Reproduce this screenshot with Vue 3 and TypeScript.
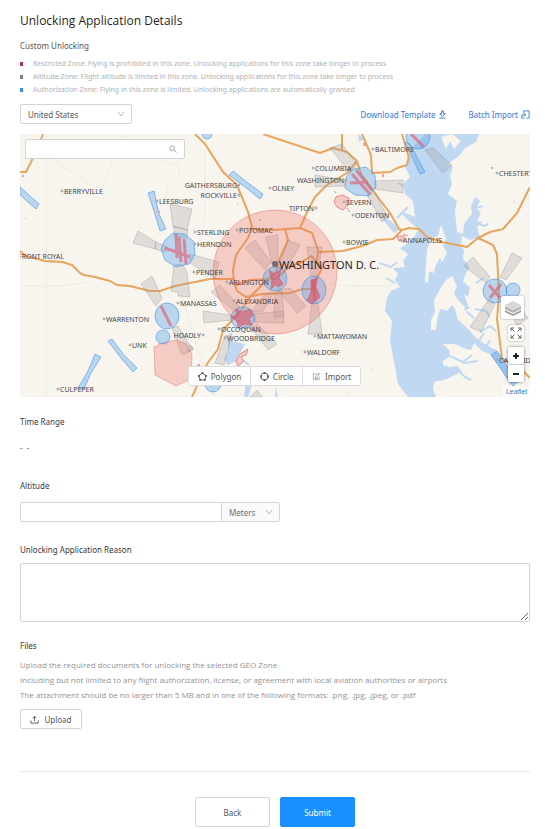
<script setup lang="ts">
import { ref } from 'vue'

type Side = 'left' | 'right' | 'none'
interface Town {
  name: string
  x: number
  y: number
  dot: Side
}

const country = ref('United States')
const unit = ref('Meters')
const altitude = ref('')
const reason = ref('')
const search = ref('')

const zones = [
  { kind: 'restricted', text: 'Restricted Zone: Flying is prohibited in this zone. Unlocking applications for this zone take longer to process' },
  { kind: 'altitude', text: 'Altitude Zone: Flight altitude is limited in this zone. Unlocking applications for this zone take longer to process' },
  { kind: 'authorization', text: 'Authorization Zone: Flying in this zone is limited. Unlocking applications are automatically granted' },
]

const towns: Town[] = [
  { name: 'BERRYVILLE', x: 64, y: 194, dot: 'left' },
  { name: 'LEESBURG', x: 159, y: 204, dot: 'left' },
  { name: 'GAITHERSBURG', x: 237, y: 188, dot: 'right' },
  { name: 'ROCKVILLE', x: 237, y: 198, dot: 'right' },
  { name: 'OLNEY', x: 272, y: 191, dot: 'left' },
  { name: 'COLUMBIA', x: 315, y: 171, dot: 'left' },
  { name: 'WASHINGTON', x: 344, y: 183, dot: 'right' },
  { name: 'SEVERN', x: 346, y: 205, dot: 'left' },
  { name: 'TIPTON', x: 314, y: 211, dot: 'right' },
  { name: 'ODENTON', x: 355, y: 218, dot: 'left' },
  { name: 'STERLING', x: 197, y: 235, dot: 'left' },
  { name: 'HERNDON', x: 197, y: 247, dot: 'left' },
  { name: 'POTOMAC', x: 239, y: 233, dot: 'left' },
  { name: 'BOWIE', x: 346, y: 245, dot: 'left' },
  { name: 'BALTIMORE', x: 375, y: 152, dot: 'left' },
  { name: 'CHESTERTOWN', x: 499, y: 176, dot: 'left' },
  { name: 'ANNAPOLIS', x: 403, y: 243, dot: 'left' },
  { name: 'PENDER', x: 196, y: 275, dot: 'left' },
  { name: 'ARLINGTON', x: 229, y: 285, dot: 'left' },
  { name: 'MANASSAS', x: 180, y: 306, dot: 'left' },
  { name: 'ALEXANDRIA', x: 236, y: 304, dot: 'left' },
  { name: 'OCCOQUAN', x: 221, y: 332, dot: 'left' },
  { name: 'WOODBRIDGE', x: 227, y: 341, dot: 'left' },
  { name: 'HOADLY', x: 201, y: 338, dot: 'right' },
  { name: 'WARRENTON', x: 106, y: 322, dot: 'left' },
  { name: 'UNK', x: 132, y: 348, dot: 'left' },
  { name: 'CULPEPER', x: 60, y: 392, dot: 'left' },
  { name: 'MATTAWOMAN', x: 317, y: 339, dot: 'left' },
  { name: 'WALDORF', x: 307, y: 355, dot: 'left' },
  { name: 'CAMBRIDGE', x: 499, y: 363, dot: 'left' },
  { name: 'FRONT ROYAL', x: 64, y: 259, dot: 'none' },
]

const roads = [
  'M43 134L40 142 31 162 26 172H20',
  'M20 251L26 256 45 261 62 262 72 265 80 273 84 275 95 277 110 281 117 285 130 286 150 291 160 291 175 286 190 283 210 279 233 279',
  'M195 134L205 144 223 172 237 185 248 212 252 227 248 238 236 255 233 270 234 282 237 291 246 297 262 294 290 293 303 289 312 289 322 268 317 262 318 250 312 233 300 228 273 230 252 229',
  'M285 229L288 240 280 258 276 272 264 283 250 297 240 312 223 330 218 349 207 364 192 397',
  'M300 228L308 210 315 197 327 185 347 173 357 161',
  'M263 134L320 153 333 148 347 152 357 161 361 174 380 200 390 213 399 229 402 230',
  'M342 134V150',
  'M317 262L311 256 300 263 290 266 276 279 250 280 236 285',
  'M318 252L343 251 362 246 377 240 393 239 402 230 409 228 419 229 427 237 442 242 467 247 478 238 490 232 503 229 517 213 530 187',
  'M478 238L493 245 497 254 498 275 499 295 497 319 500 342 502 359 519 367 530 378',
  'M362 134L371 155 372 173 390 172 397 168 407 165 409 158 402 134',
]

const minorRoads = [
  'M50 158L72 172 90 184 102 188 106 178 113 160 128 134',
  'M160 161L178 165 180 174 168 186 163 205',
  'M20 286H60L90 282',
  'M46 134V397',
  'M205 150V220',
  'M180 290L196 345 215 397',
  'M300 350L330 370 350 397',
  'M330 285L370 286 392 286',
]

const approaches = [
  '170,204 192,209 187,230 173,227',
  '174,226 188,230 187,238 174,236',
  '138,231 156,242 155,249 133,243',
  '156,242 167,247 165,252 155,249',
  '174,265 171,291 178,292 178,296 190,297 187,272 182,264',
  '190,254 219,262 215,279 190,263',
  '330,148 342,144 357,165 350,173',
  '315,175 345,180 345,186 315,187',
  '375,181 403,180 403,193 375,189',
  '367,195 375,193 388,217 382,222',
  '425,150 433,148 452,165 443,173',
  '245,248 255,240 271,262 265,270',
  '266,237 278,235 278,261 272,264',
  '288,240 300,245 285,271 279,268',
  '307,247 322,247 317,277 311,277',
  '278,290 290,288 306,306 297,313',
  '253,314 283,311 284,323 254,322',
  '203,311 231,315 231,320 204,323',
  '308,334 312,302 318,302 322,334',
  '266,293 274,293 262,312 251,312',
  '275,292 282,291 284,317 274,317',
  '211,292 220,285 240,307 235,312',
  '225,336 232,334 224,365 215,363',
  '251,328 257,324 277,344 268,350',
  '141,284 152,276 162,298 156,306',
  '172,328 178,326 193,350 182,355',
  '464,266 473,257 490,277 486,283',
  '512,253 522,258 506,280 500,277',
  '489,299 495,304 481,332 470,327',
  '505,300 512,296 528,318 517,326',
  '250,397 257,390 262,397',
  '190,345 194,348 188,352',
]

const corridors = [
  '20,187 39,204 36,209 20,195',
  '148,193 154,191 159,214 166,229 160,231 155,214',
  '229,175 233,171 248,183 263,194 260,199 245,187',
  '108,341 112,339 124,355 137,368 133,372 121,358',
  '95,354 101,357 91,373 84,389 78,388 88,371',
  '405,142 410,144 425,172 420,174',
  '491,355 497,351 518,382 513,386',
]

const runways = [
  'M176 234L177 258M179 237L181 262M184 239L186 264M165 248L190 257',
  'M161 306L171 326',
  'M352 174L370 194M350 183L368 182M356 170L372 190',
  'M411 134L424 147',
  'M489 285L500 298M501 284L490 298',
  'M313 280L315 300',
]
</script>

<template>
  <main class="page">
    <h1>Unlocking Application Details</h1>
    <h2>Custom Unlocking</h2>
    <ul class="zones">
      <li v-for="z in zones" :key="z.kind" :class="z.kind">{{ z.text }}</li>
    </ul>

    <div class="bar">
      <div class="picker country">
        <select v-model="country" aria-label="Country">
          <option>United States</option>
          <option>Canada</option>
        </select>
        <svg viewBox="0 0 8 8" aria-hidden="true"><path d="M1 2l3 4 3-4" /></svg>
      </div>
      <nav class="links">
        <a href="#template">Download Template
          <svg viewBox="0 0 10 10" aria-hidden="true"><path d="M4 1h2v3h2L5 7.200 2 4h2zM1.500 9h7" /></svg>
        </a>
        <a href="#batch">Batch Import
          <svg viewBox="0 0 10 10" aria-hidden="true"><path d="M3 4V1h6v8H6M1 5.500h4M3.500 3.800L5.300 5.500 3.500 7.300M1 5.500V9h3" /></svg>
        </a>
      </nav>
    </div>

    <section class="map" aria-label="Zone map">
      <svg class="canvas" viewBox="20 134 510 263" preserveAspectRatio="xMidYMid slice">
        <rect class="land" x="20" y="134" width="510" height="263" />
        <g class="minor"><path v-for="d in minorRoads" :key="d" :d="d" /></g>

        <path class="water" d="M425 134H479L476 142 465 148 460 155 448 164 453 167 450 176 452 184 448 194 457 201 455 211 456 221 457 232 463 234 464 224 472 214 471 206 475 197 480 201 476 208 481 213 477 221 483 222 477 227 480 237 470 240 462 236 461 246 464 250 463 259 470 267 466 273 463 281 470 288 467 301 473 307 463 311 455 309 458 320 464 325 470 331 474 336 483 343 490 347 496 350 506 364 517 382 510 385 500 368 490 354 482 351 474 343 471 350 466 349 455 344 443 344 449 350 450 356 443 361 443 365 450 367 457 366 462 371 457 374 447 379 434 382 433 389 436 397H408L398 384 395 367 390 341 392 321 385 311 387 297 391 291 400 287 395 280 398 274 393 268 405 267 403 261 408 254 400 248 407 244 415 236 418 229 410 222 400 212 408 214 415 217 413 201 405 194 403 184 410 177 405 167 408 154 413 147Z" />
        <path class="water" d="M228 340L245 344 239 355 235 362 227 365 224 358 228 352ZM275 397L276 386 278 397ZM247 372L252 385 248 397 244 397ZM358 134L364 139 359 142ZM378 212L391 221 399 230 394 233 388 226 384 221Z" />
        <path class="land" d="M441 225L444 233 446 239 443 246 447 253 442 262 440 258 435 267 434 273 429 271 428 283 425 282 426 264 427 250 431 238 438 236ZM452 276L457 286 454 293 458 300 465 307 462 316 457 311 452 305 447 311 440 309 437 320 436 330 431 330 431 320 435 312 434 300 440 289 446 280ZM441 137L452 134 461 141 454 149 450 141 446 149ZM464 294L470 298 477 304 475 312 468 306Z" />
        <path class="creek" d="M379 263L391 267 397 262M386 278L395 283M397 218L408 207M450 356L465 363 478 361M457 369L465 377 471 380M464 361L472 355M476 283L484 278M475 309L486 311 490 317M472 209L483 206M479 224L484 226 488 224M480 332L490 326 496 331M466 311L474 318M478 342L484 333M486 347L490 340M405 187L398 183M244 361L249 365" />

        <g class="road"><path v-for="d in roads" :key="d" :d="d" /></g>

        <g class="approach"><polygon v-for="p in approaches" :key="p" :points="p" /></g>
        <g class="prohibited">
          <circle cx="275" cy="272" r="62" />
          <polygon points="154,346 158,347 158,344 176,340 187,344 188,348 192,354 191,379 176,386 155,375" />
        </g>
        <g class="advisory">
          <polygon v-for="p in corridors" :key="p" :points="p" />
          <path d="M165 240L173 233 185 234 194 242 195 255 189 264 176 267 165 260 161 249Z" />
          <path d="M353 169L366 167 375 175 376 187 369 196 355 195 345 188 346 177Z" />
          <circle cx="275" cy="279" r="12" />
          <ellipse cx="314" cy="290" rx="12" ry="14" />
          <ellipse cx="243" cy="318" rx="12" ry="11" />
          <ellipse cx="167" cy="316" rx="12" ry="13" />
          <circle cx="163" cy="337" r="7" />
          <circle cx="418" cy="137" r="12" />
          <circle cx="495" cy="291" r="12" />
          <circle cx="513" cy="290" r="7" />
          <circle cx="213" cy="384" r="8" />
          <circle cx="207" cy="134" r="5" />
        </g>
        <g class="runway"><path v-for="d in runways" :key="d" :d="d" /></g>
        <path class="core" d="M269 270L274 274 281 269 279 278 283 284 278 287 276 284 271 289 272 280ZM311 280L317 278 316 287 320 297 312 304 307 300 311 293ZM236 309L242 312 250 309 253 315 249 319 252 325 244 324 239 328 236 320 231 317 237 315Z" />
        <path class="outline" d="M336 197L342 195 349 198 348 205 343 210 337 207 334 202ZM334 191L336 193M347 208L350 212M240 354L248 349 246 355 241 357 244 361 238 366 236 361ZM397 236H404V241H399ZM403 234L408 236M196 367L199 364 201 370 197 373Z" />
        <path class="speck" d="M22 175h2v2h-2zM25 218h1v1h-1zM259 219h2v2h-2zM382 174h2v3h-2zM363 143h3v3h-3zM491 167h2v2h-2zM514 201h1v1h-1zM371 369h1v1h-1zM237 204h1v1h-1zM158 211h2v2h-2z" />

        <g class="towns">
          <template v-for="t in towns" :key="t.name">
            <circle v-if="t.dot !== 'none'" :cx="t.dot === 'right' ? t.x + 2 : t.x - 2" :cy="t.y - 3" r="1" />
            <text :x="t.x" :y="t.y" :text-anchor="t.dot === 'left' ? 'start' : 'end'">{{ t.name }}</text>
          </template>
          <rect x="273" y="262" width="4" height="4" />
          <text class="capital" x="279" y="269">WASHINGTON D. C.</text>
        </g>
      </svg>

      <div class="search">
        <input v-model="search" type="text" aria-label="Search location" />
        <svg viewBox="0 0 8 8" aria-hidden="true"><circle cx="3.200" cy="3.200" r="2.400" /><path d="M5 5l2.500 2.500" /></svg>
      </div>

      <div class="tools">
        <button type="button">
          <svg viewBox="0 0 10 10" aria-hidden="true"><path d="M5 1.200L9 4.200 7.600 8.800H2.400L1 4.200z" /><path class="node" d="M5 1.200h.01M9 4.200h.01M7.600 8.800h.01M2.400 8.800h.01M1 4.200h.01" /></svg>
          Polygon
        </button>
        <button type="button">
          <svg viewBox="0 0 10 10" aria-hidden="true"><circle cx="5" cy="5" r="4" /><path class="node" d="M5 1h.01M9 5h.01M5 9h.01M1 5h.01" /></svg>
          Circle
        </button>
        <button type="button">
          <svg class="muted" viewBox="0 0 10 10" aria-hidden="true"><path d="M6 2H1.500v6.500H8V5M3.500 6.500L4 5 8 1l1 1-4 4zM3 7h4" /></svg>
          Import
        </button>
      </div>

      <div class="controls">
        <button class="layers" type="button" aria-label="Layers">
          <svg viewBox="0 0 18 18" aria-hidden="true">
            <path fill="#9a9a9a" d="M1 11l8 4 8-4v2l-8 4-8-4z" /><path fill="#f4f4f4" d="M1 10l8 4 8-4v1l-8 4-8-4z" /><path fill="#b4b4b4" d="M1 7l8 4 8-4v3l-8 4-8-4z" /><path fill="#d6d6d6" d="M9 2l8 4-8 5-8-5z" />
          </svg>
        </button>
        <button type="button" aria-label="Full screen">
          <svg viewBox="0 0 12 12" aria-hidden="true"><path class="arrows" d="M1 4V1h3M1 1l3.500 3.500M8 1h3v3M11 1L7.500 4.500M1 8v3h3M1 11l3.500-3.500M11 8v3H8M11 11L7.500 7.500" /></svg>
        </button>
        <div class="zoom">
          <button type="button" aria-label="Zoom in"><svg viewBox="0 0 12 12" aria-hidden="true"><path d="M3 6h6M6 3v6" /></svg></button>
          <button type="button" aria-label="Zoom out"><svg viewBox="0 0 12 12" aria-hidden="true"><path d="M3 6h6" /></svg></button>
        </div>
      </div>
      <a class="credit" href="#leaflet">Leaflet</a>
    </section>

    <section class="field time">
      <h3>Time Range</h3>
      <p>-&nbsp; -</p>
    </section>

    <section class="field altitude-field">
      <label for="altitude">Altitude</label>
      <div class="group">
        <input id="altitude" v-model="altitude" type="text" />
        <div class="picker unit">
          <select v-model="unit" aria-label="Altitude unit">
            <option>Meters</option>
            <option>Feet</option>
          </select>
          <svg viewBox="0 0 8 8" aria-hidden="true"><path d="M1 2l3 4 3-4" /></svg>
        </div>
      </div>
    </section>

    <section class="field reason-field">
      <label for="reason">Unlocking Application Reason</label>
      <textarea id="reason" v-model="reason"></textarea>
    </section>

    <section class="field files">
      <h3>Files</h3>
      <p>Upload the required documents for unlocking the selected GEO Zone</p>
      <p>Including but not limited to any flight authorization, license, or agreement with local aviation authorities or airports</p>
      <p>The attachment should be no larger than 5 MB and in one of the following formats: .png, .jpg, .jpeg, or .pdf</p>
      <button class="upload" type="button">
        <svg viewBox="0 0 10 10" aria-hidden="true"><path d="M1 6v3h8V6M5 7V1.500M3 3.500l2-2 2 2" /></svg>
        Upload
      </button>
    </section>

    <footer class="actions">
      <button type="button">Back</button>
      <button class="primary" type="submit">Submit</button>
    </footer>
  </main>
</template>

<style>
body {
  margin: 0;
  background: #fff;
}
</style>

<style scoped>
* {
  box-sizing: border-box;
}

.page {
  padding: 12px 15px 2px 20px;
  font-family: 'Noto Sans', 'Open Sans', sans-serif;
  font-size: 8px;
  color: #55555a;
}

h1, h2, h3, p, ul {
  margin: 0;
  padding: 0;
  font-weight: 400;
}

h1 {
  font-family: 'Open Sans', sans-serif;
  font-size: 12px;
  line-height: 18px;
  color: #1f1f24;
}

h2 {
  margin-top: 8px;
  font-size: 8px;
  line-height: 16px;
}

button, input, select, textarea {
  margin: 0;
  font: inherit;
  color: inherit;
  border: 1px solid #d4d4d4;
  border-radius: 2px;
  background: #fff;
  outline: none;
}

svg {
  fill: none;
  stroke: currentColor;
}

.zones {
  margin-top: 3px;
  margin-bottom: 8px;
  list-style: none;
  font-size: 7px;
  line-height: 13px;
  color: #b0b0b2;
}

.zones li {
  display: flex;
  align-items: center;
  gap: 10px;
}

.zones li::before {
  content: '';
  width: 3px;
  height: 4px;
  background: #b5344e;
}

.zones .altitude::before {
  background: #7d828a;
}

.zones .authorization::before {
  background: #3a8fe0;
}

.bar {
  display: flex;
  justify-content: space-between;
  align-items: center;
}

.picker {
  display: flex;
  position: relative;
}

.picker select {
  width: 100%;
  height: 20px;
  padding: 0 7px;
  appearance: none;
}

.picker svg {
  position: absolute;
  right: 7px;
  top: 6px;
  width: 8px;
  height: 8px;
  color: #b8b8b8;
  pointer-events: none;
}

.country {
  width: 112px;
}

.links {
  display: flex;
  gap: 21px;
}

.links a {
  display: flex;
  align-items: center;
  gap: 3px;
  color: #3578d4;
  text-decoration: none;
}

.links svg {
  width: 9px;
  height: 9px;
}

.map {
  position: relative;
  margin-top: 10px;
  overflow: hidden;
}

.canvas {
  display: block;
  width: 100%;
  stroke: none;
}

.land {
  fill: #f8f5ef;
}

.water {
  fill: #c0d8f1;
}

.creek {
  fill: none;
  stroke: #c0d8f1;
  stroke-width: 2;
}

.minor {
  fill: none;
  stroke: #efebe4;
}

.road {
  fill: none;
  stroke: #e8a55e;
  stroke-width: 2;
  stroke-linejoin: round;
}

.approach {
  fill: rgba(150, 150, 150, 0.25);
  stroke: rgba(130, 130, 130, 0.3);
}

.prohibited {
  fill: rgba(240, 110, 95, 0.3);
  stroke: rgba(225, 95, 90, 0.4);
}

.advisory {
  fill: rgba(100, 170, 235, 0.42);
  stroke: rgba(70, 150, 225, 0.6);
}

.runway {
  fill: none;
  stroke: rgba(222, 95, 108, 0.65);
  stroke-width: 3;
}

.core {
  fill: rgba(222, 75, 90, 0.55);
  stroke: rgba(205, 70, 95, 0.5);
}

.outline {
  fill: rgba(240, 110, 95, 0.3);
  stroke: #e8868a;
}

.speck {
  fill: #eda0a2;
}

.towns {
  font-size: 7px;
}

.towns text {
  fill: #45454a;
}

.towns circle {
  fill: #fff;
  stroke: #98989c;
}

.towns rect {
  fill: #777f96;
  stroke: #44485a;
}

.towns .capital {
  font-size: 11px;
  fill: #26262b;
}

.search {
  position: absolute;
  left: 5px;
  top: 5px;
  width: 160px;
}

.search input {
  display: block;
  width: 100%;
  height: 20px;
  padding: 0 20px 0 6px;
}

.search svg {
  position: absolute;
  right: 8px;
  top: 6px;
  width: 8px;
  height: 8px;
  color: #aaa;
}

.tools {
  position: absolute;
  left: 50%;
  bottom: 11px;
  display: flex;
  width: 173px;
  margin-left: -87px;
  border: 1px solid #dcdcdc;
  border-radius: 2px;
  background: #fff;
}

.tools button {
  display: flex;
  flex: 1 1 auto;
  align-items: center;
  justify-content: center;
  gap: 4px;
  height: 18px;
  padding: 0;
  border: 0;
}

.tools button + button {
  border-left: 1px solid #dcdcdc;
  border-radius: 0;
}

.tools svg {
  width: 9px;
  height: 9px;
  overflow: visible;
}

.tools .node {
  stroke-width: 2;
  stroke-linecap: square;
}

.tools .muted {
  color: #aaa;
}

.controls {
  position: absolute;
  right: 6px;
  bottom: 15px;
  display: flex;
  flex-direction: column;
  align-items: flex-end;
  gap: 6px;
}

.controls button {
  display: grid;
  place-items: center;
  width: 16px;
  height: 16px;
  padding: 0;
  border: 0;
  color: #222;
  box-shadow: 0 0 2px rgba(0, 0, 0, 0.45);
}

.controls button svg {
  width: 12px;
  height: 12px;
  stroke-width: 2;
}

.controls button .arrows {
  stroke: #666;
  stroke-width: 1;
}

.controls .layers {
  width: 23px;
  height: 23px;
}

.controls .layers svg {
  width: 18px;
  height: 18px;
  stroke: none;
}

.zoom {
  display: flex;
  flex-direction: column;
  border-radius: 2px;
  box-shadow: 0 0 3px rgba(0, 0, 0, 0.5);
}

.zoom button {
  height: 17px;
  box-shadow: none;
}

.zoom button + button {
  height: 18px;
  border-top: 1px solid #ccc;
  border-radius: 0 0 2px 2px;
}

.credit {
  position: absolute;
  right: 0;
  bottom: 0;
  padding: 0 3px;
  font-family: 'Liberation Sans', sans-serif;
  font-size: 7px;
  line-height: 10px;
  color: #2f86b5;
  text-decoration: none;
  background: rgba(255, 255, 255, 0.7);
}

.field h3, .field label {
  display: block;
  font-size: 8px;
  line-height: 16px;
  color: #38383d;
}

.time {
  margin-top: 17px;
}

.time p {
  margin-top: 10px;
  line-height: 16px;
}

.altitude-field {
  margin-top: 22px;
}

.group {
  display: flex;
  width: 260px;
  margin-top: 8px;
}

.group input {
  flex: 1;
  min-width: 0;
  height: 20px;
  border-radius: 2px 0 0 2px;
}

.unit {
  width: 59px;
  margin-left: -1px;
}

.unit select {
  background: #fafafa;
  border-radius: 0 2px 2px 0;
  color: #6c6c70;
}

.reason-field {
  margin-top: 20px;
}

.reason-field textarea {
  display: block;
  width: 100%;
  height: 59px;
  margin-top: 5px;
  resize: vertical;
}

.files {
  margin-top: 16px;
}

.files h3 {
  margin-bottom: 3px;
}

.files p {
  font-family: 'Open Sans', sans-serif;
  line-height: 15px;
  color: #929296;
}

.upload {
  display: flex;
  align-items: center;
  justify-content: center;
  gap: 5px;
  width: 62px;
  height: 20px;
  margin-top: 7px;
  padding: 0;
}

.upload svg {
  width: 9px;
  height: 9px;
}

.actions {
  display: flex;
  justify-content: center;
  gap: 10px;
  margin-top: 42px;
  padding-top: 25px;
  border-top: 1px solid #e8e8e8;
}

.actions button {
  width: 75px;
  height: 30px;
  padding: 0;
}

.actions .primary {
  color: #fff;
  border-color: #1890ff;
  background: #1890ff;
}
</style>
